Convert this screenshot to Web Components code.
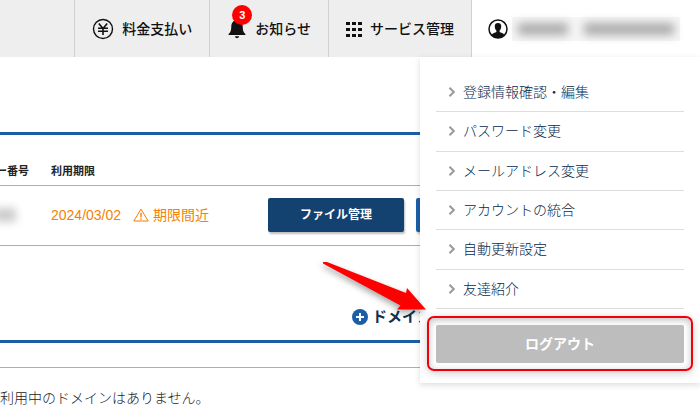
<!DOCTYPE html>
<html lang="ja">
<head>
<meta charset="utf-8">
<title>サーバー管理</title>
<style>
  body {
    margin: 0;
    background: #fff;
    color: #222;
    font-family: "Liberation Sans", "Noto Sans CJK JP", sans-serif;
    font-size: 14px;
    line-height: 20px;
    overflow: hidden;
  }
</style>
</head>
<body>
<control-panel></control-panel>

<script>
const icons = {
  yen: '<svg width="22" height="22" viewBox="0 0 22 22" fill="none" stroke="#111">' +
    '<circle cx="11" cy="11" r="9.5" stroke-width="1.4"/>' +
    '<path d="M6.8 5.5L11 10.5L15.2 5.5M11 10.5V17M6 10.3H16M6 13.2H16" stroke-width="1.6"/></svg>',
  bell: '<svg width="20" height="20" viewBox="0 0 20 20" fill="#111">' +
    '<path d="M10 1C6 1.4 4.4 4.2 4.3 7.5C4.2 11.5 3.5 13.500 1.6 15V16H18.4V15C16.5 13.500 15.8 11.5 15.7 7.5C15.6 4.2 14 1.4 10 1ZM7.8 17.3H12.2Q11.6 19.2 10 19.2Q8.4 19.2 7.8 17.3Z"/></svg>',
  grid: '<svg width="16" height="16" viewBox="0 0 16 16" fill="#111">' +
    '<path d="M0 1h4v3H0zM6 1h4v3H6zM12 1h4v3h-4zM0 7h4v3H0zM6 7h4v3H6zM12 7h4v3h-4zM0 13h4v3H0zM6 13h4v3H6zM12 13h4v3h-4z"/></svg>',
  user: '<svg width="20" height="20" viewBox="0 0 20 20">' +
    '<circle cx="10" cy="10" r="9" fill="#fff" stroke="#111" stroke-width="1.5"/>' +
    '<path d="M10 4C7.6 4 6.6 5.7 6.8 7.7C6.9 9.5 7.5 10.8 8.4 11.6V13C7.2 13.8 4.6 14 3.6 15.8C5 18 7.4 19 10 19S15 18 16.4 15.8C15.4 14 12.8 13.8 11.6 13V11.6C12.5 10.8 13.1 9.5 13.2 7.7C13.4 5.7 12.4 4 10 4Z" fill="#111"/></svg>',
  chevron: '<svg width="8" height="10" viewBox="0 0 8 10" fill="none" stroke="#999" stroke-width="2"><path d="M1.5 .8L5.8 5L1.5 9.2"/></svg>',
  warning: '<svg width="16" height="14" viewBox="0 0 16 14" fill="none" stroke="#f57c00">' +
    '<path d="M8 1.2L15.2 13H.8Z"/><path d="M8 4.8V9.2M8 10.3V11.8" stroke-width="1.4"/></svg>',
  plus: '<svg width="16" height="16" viewBox="0 0 16 16"><circle cx="8" cy="8" r="8" fill="#1a5fa5"/>' +
    '<path d="M8 4V12M4 8H12" stroke="#fff" stroke-width="2"/></svg>'
};

class UiIcon extends HTMLElement {
  constructor() {
    super();
    const shadow = this.attachShadow({mode: 'open'});
    shadow.innerHTML = '<style>:host { display: inline-flex; flex: none; } svg { display: block; }</style>' +
      (icons[this.getAttribute('name')] || '');
  }
}

class HeaderItem extends HTMLElement {
  constructor() {
    super();
    const shadow = this.attachShadow({mode: 'open'});
    const badge = this.getAttribute('badge');
    shadow.innerHTML = `
      <style>
        :host { display: flex; border-left: 1px solid #d0d0d0; }
        a {
          display: flex;
          align-items: center;
          gap: 8px;
          padding: 0 17px;
          color: #111;
          font-weight: 500;
          text-decoration: none;
          white-space: nowrap;
        }
        .icon { position: relative; display: flex; }
        .badge {
          position: absolute;
          left: 5px;
          bottom: 14px;
          width: 20px;
          height: 20px;
          border-radius: 50%;
          background: #f00;
          color: #fff;
          font-size: 11px;
          font-weight: 700;
          text-align: center;
        }
      </style>
      <a href="#">
        <span class="icon">
          <ui-icon name="${this.getAttribute('icon')}"></ui-icon>
          ${badge ? '<span class="badge">' + badge + '</span>' : ''}
        </span>
        <slot></slot>
      </a>`;
  }
}

class MenuLink extends HTMLElement {
  constructor() {
    super();
    const shadow = this.attachShadow({mode: 'open'});
    shadow.innerHTML = `
      <style>
        :host { display: flex; border-bottom: 1px solid #ddd; }
        a {
          flex: 1;
          display: flex;
          align-items: center;
          gap: 7px;
          padding: 0 12px;
          color: #06284c;
          font-weight: 300;
          text-decoration: none;
        }
      </style>
      <a href="#"><ui-icon name="chevron"></ui-icon><slot></slot></a>`;
  }
}

class AccountMenu extends HTMLElement {
  constructor() {
    super();
    const shadow = this.attachShadow({mode: 'open'});
    shadow.innerHTML = `
      <style>
        :host {
          display: block;
          box-sizing: border-box;
          padding: 16px 16px 20px;
          background: #fff;
          box-shadow: 0 2px 6px rgba(0, 0, 0, .14);
        }
        nav { display: grid; grid-auto-rows: 1fr; min-height: 236px; }
        .logout { position: relative; margin-top: 16px; }
        .logout::after {
          content: "";
          position: absolute;
          inset: -9px -9px -8px;
          border: 2px solid #f00008;
          border-radius: 7px;
          box-shadow: 0 2px 8px rgba(0, 0, 0, .2), inset 0 2px 7px rgba(0, 0, 0, .25);
          pointer-events: none;
        }
        button {
          position: relative;
          z-index: 1;
          display: block;
          width: 100%;
          height: 38px;
          border: 0;
          border-radius: 2px;
          background: #bdbdbd;
          color: #fff;
          font: inherit;
          font-weight: 700;
        }
        .arrow { position: absolute; z-index: 2; right: 250px; bottom: 32px; pointer-events: none; }
      </style>
      <nav>
        <menu-link>登録情報確認・編集</menu-link>
        <menu-link>パスワード変更</menu-link>
        <menu-link>メールアドレス変更</menu-link>
        <menu-link>アカウントの統合</menu-link>
        <menu-link>自動更新設定</menu-link>
        <menu-link>友達紹介</menu-link>
      </nav>
      <div class="logout">
        <button type="button">ログアウト</button>
        <svg class="arrow" width="130" height="80" viewBox="304 251 130 80">
          <path d="M323 262L327 262L406 293L407 288L426 309.500L397 309.500L400.500 305.500L323 263.500Z" fill="#f00"
            style="filter: drop-shadow(-1px 3px 3px rgba(0, 0, 0, .35))"/>
        </svg>
      </div>`;
  }
}

class SiteHeader extends HTMLElement {
  constructor() {
    super();
    const shadow = this.attachShadow({mode: 'open'});
    shadow.innerHTML = `
      <style>
        :host { display: block; }
        header { display: flex; justify-content: flex-end; height: 57px; background: #eee; }
        .account {
          position: relative;
          box-sizing: border-box;
          display: flex;
          align-items: center;
          gap: 4px;
          width: 229px;
          padding: 0 16px;
          border-left: 1px solid #d0d0d0;
          background: #fff;
        }
        .name {
          display: flex;
          align-items: center;
          gap: 16px;
          height: 24px;
          padding: 0 6px;
          background: #f6f6f6;
        }
        .name i { width: 50px; height: 12px; background: #aaa; filter: blur(5px); }
        .name i + i { width: 90px; }
        account-menu { position: absolute; z-index: 5; top: 100%; right: 0; width: 280px; }
      </style>
      <header>
        <header-item icon="yen">料金支払い</header-item>
        <header-item icon="bell" badge="3">お知らせ</header-item>
        <header-item icon="grid">サービス管理</header-item>
        <div class="account">
          <ui-icon name="user"></ui-icon>
          <span class="name"><i></i><i></i></span>
          <account-menu></account-menu>
        </div>
      </header>`;
  }
}

class ServerTable extends HTMLElement {
  constructor() {
    super();
    const shadow = this.attachShadow({mode: 'open'});
    shadow.innerHTML = `
      <style>
        :host { display: block; border-top: 3px solid #1a5fa5; }
        table { width: 100%; border-collapse: collapse; table-layout: fixed; }
        th, td { padding: 0; border-bottom: 1px solid #9ab3ca; text-align: left; white-space: nowrap; }
        th { height: 50px; font-size: 11px; font-weight: 700; vertical-align: bottom; line-height: 28px; }
        td { height: 57px; padding-bottom: 2px; }
        .number { width: 51px; }
        .limit { width: 217px; }
        th.number span { margin-left: -4px; }
        .masked { display: block; width: 22px; height: 14px; margin-left: -6px; background: #ccc; filter: blur(4px); }
        .date { display: flex; align-items: center; gap: 12px; color: #f58200; }
        .soon { display: flex; align-items: center; gap: 4px; }
        .actions { display: flex; gap: 12px; }
        button {
          width: 136px;
          height: 34px;
          border: 0;
          border-radius: 2px;
          background: #134270;
          box-shadow: 1px 2px 2px rgba(0, 0, 0, .25);
          color: #fff;
          font: inherit;
          font-size: 12px;
          font-weight: 700;
        }
        .second { background: #1a5fa5; }
      </style>
      <table>
        <thead>
          <tr><th class="number"><span>ー番号</span></th><th class="limit">利用期限</th><th></th></tr>
        </thead>
        <tbody>
          <tr>
            <td><span class="masked"></span></td>
            <td>
              <div class="date">2024/03/02
                <span class="soon"><ui-icon name="warning"></ui-icon>期限間近</span>
              </div>
            </td>
            <td>
              <div class="actions">
                <button type="button">ファイル管理</button>
                <button type="button" class="second" aria-label="サーバー管理"></button>
              </div>
            </td>
          </tr>
        </tbody>
      </table>`;
  }
}

class DomainSection extends HTMLElement {
  constructor() {
    super();
    const shadow = this.attachShadow({mode: 'open'});
    shadow.innerHTML = `
      <style>
        :host { display: block; }
        .bar {
          display: flex;
          justify-content: flex-end;
          padding: 0 268px 13px 0;
          border-bottom: 3px solid #1a5fa5;
        }
        a {
          display: flex;
          align-items: center;
          gap: 4px;
          color: #103050;
          font-size: 15px;
          font-weight: 700;
          text-decoration: none;
        }
        .head { height: 24px; border-bottom: 1px solid #9ab3ca; }
        p { margin: 20px 0 0; font-weight: 300; }
      </style>
      <div class="bar"><a href="#"><ui-icon name="plus"></ui-icon>ドメイン</a></div>
      <div class="head"></div>
      <p>利用中のドメインはありません。</p>`;
  }
}

class ControlPanel extends HTMLElement {
  constructor() {
    super();
    const shadow = this.attachShadow({mode: 'open'});
    shadow.innerHTML = `
      <style>
        :host { display: block; }
        main { padding-top: 75px; }
        domain-section { margin-top: 61px; }
      </style>
      <site-header></site-header>
      <main>
        <server-table></server-table>
        <domain-section></domain-section>
      </main>`;
  }
}

customElements.define('ui-icon', UiIcon);
customElements.define('header-item', HeaderItem);
customElements.define('menu-link', MenuLink);
customElements.define('account-menu', AccountMenu);
customElements.define('site-header', SiteHeader);
customElements.define('server-table', ServerTable);
customElements.define('domain-section', DomainSection);
customElements.define('control-panel', ControlPanel);
</script>
</body>
</html>
